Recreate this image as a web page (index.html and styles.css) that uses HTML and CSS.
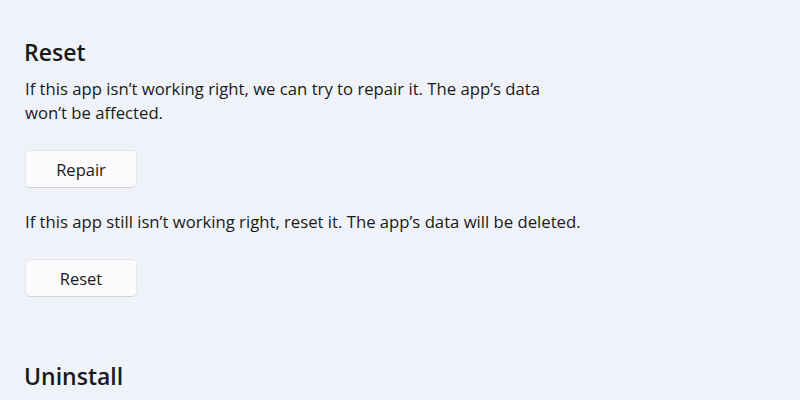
FILE: index.html
```html
<!DOCTYPE html>
<html lang="en">

<head>
    <meta charset="UTF-8">
    <meta name="viewport" content="width=device-width, initial-scale=1.0">
    <title>Reset</title>
    <link rel="stylesheet" href="styles.css">
</head>

<body>
    <div class="page">
        <div class="section">
            <h2 class="title">Reset</h2>
            <p class="desc desc_wrap">If this app isn’t working right, we can try to repair it. The app’s data won’t be affected.</p>
            <button class="btn">Repair</button>
            <p class="desc">If this app still isn’t working right, reset it. The app’s data will be deleted.</p>
            <button class="btn">Reset</button>
        </div>
        <div class="section uninstall">
            <h2 class="title">Uninstall</h2>
        </div>
    </div>
</body>

</html>
```

FILE: styles.css
```css
* {
    margin: 0;
    padding: 0;
    box-sizing: border-box;
}

body {
    background: #eff3f9;
    font-family: "Open Sans", "Noto Sans", sans-serif;
    color: #1a1a1a;
    overflow: hidden;
}

.page {
    padding: 36px 0 0 25px;
}

.title {
    font-size: 23px;
    font-weight: 600;
    line-height: 32px;
    margin-left: -1px;
}

.desc {
    font-size: 16.7px;
    line-height: 24px;
    margin-top: 9px;
}

.desc_wrap {
    width: 545px;
}

.btn {
    display: block;
    width: 112px;
    height: 38px;
    margin: 25px 0 22px;
    background: #fbfbfd;
    border: 1px solid #e5e6ea;
    border-bottom-color: #d2d3d8;
    border-radius: 5px;
    font-family: inherit;
    font-size: 16.5px;
    color: #1a1a1a;
}

.uninstall {
    margin-top: 63px;
}
```
